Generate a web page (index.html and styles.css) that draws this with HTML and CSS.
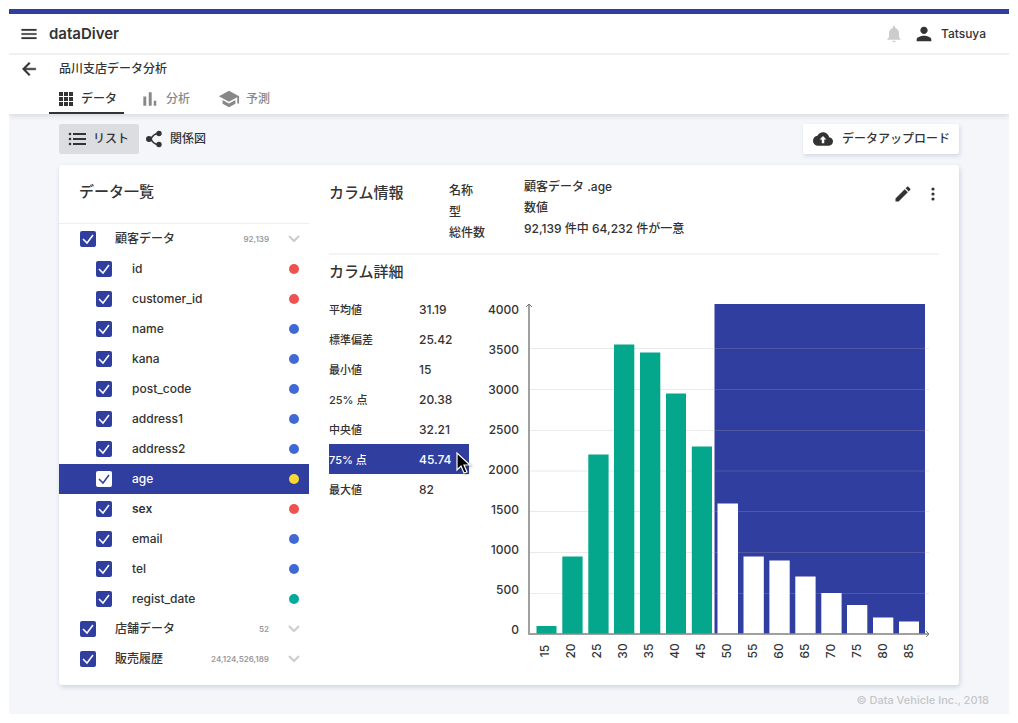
FILE: index.html
```html
<!DOCTYPE html>
<html lang="ja">
<head>
<meta charset="utf-8">
<title>dataDiver</title>
<link rel="stylesheet" href="styles.css">
</head>
<body>
<div class="app">
  <header class="topbar">
    <button class="icon-btn" aria-label="メニュー"><svg class="icon" width="20" height="20" viewBox="0 0 24 24"><path d="M3 18h18v-2H3v2zm0-5h18v-2H3v2zm0-7v2h18V6H3z" stroke="#333" stroke-width=".2"/></svg></button>
    <h1 class="brand">dataDiver</h1>
    <button class="icon-btn bell" aria-label="通知"><svg class="icon" width="20" height="20" viewBox="0 0 24 24"><path d="M12 22c1.100 0 2-.9 2-2h-4c0 1.100.89 2 2 2zm6-6v-5c0-3.070-1.640-5.640-4.500-6.320V4c0-.83-.67-1.500-1.500-1.500s-1.500.67-1.500 1.500v.68C7.630 5.360 6 7.920 6 11v5l-2 2v1h16v-1l-2-2z"/></svg></button>
    <button class="user"><svg class="icon" width="22" height="22" viewBox="0 0 24 24"><path d="M12 12c2.210 0 4-1.790 4-4s-1.790-4-4-4-4 1.790-4 4 1.790 4 4 4zm0 2c-2.670 0-8 1.340-8 4v2h16v-2c0-2.660-5.330-4-8-4z"/></svg><span>Tatsuya</span></button>
  </header>

  <div class="subhead">
    <div class="crumb">
      <button class="icon-btn" aria-label="戻る"><svg class="icon" width="20" height="20" viewBox="0 0 24 24"><path d="M20 11H7.800l5.600-5.600L12 4l-8 8 8 8 1.400-1.400L7.800 13H20z" stroke="#333" stroke-width=".6"/></svg></button>
      <span class="crumb-title">品川支店データ分析</span>
    </div>
    <nav class="tabs">
      <a class="tab active" href="#data"><svg class="icon" width="20" height="20" viewBox="0 0 20 20"><path d="M4 3h4v4H4zM9 3h4v4H9zM14 3h4v4h-4zM4 8h4v4H4zM9 8h4v4H9zM14 8h4v4h-4zM4 13h4v4H4zM9 13h4v4H9zM14 13h4v4h-4z"/></svg>データ</a>
      <a class="tab" href="#analysis"><svg class="icon" width="20" height="20" viewBox="0 0 24 24"><path d="M4 9h3.500v11H4zM10.500 4h3.500v16h-3.500zM16.500 14h3v6h-3z"/></svg>分析</a>
      <a class="tab wide" href="#predict"><svg class="icon" width="22" height="22" viewBox="0 0 24 24"><path d="M5 13.180v4L12 21l7-3.820v-4L12 17l-7-3.820zM12 3L1 9l11 6 9-4.910V17h2V9L12 3z"/></svg>予測</a>
    </nav>
  </div>

  <main class="main">
    <div class="toolbar">
      <button class="tool selected"><svg class="icon" width="20" height="20" viewBox="0 0 20 20"><path d="M6 4h13v2H6zM6 9h13v2H6zM6 14h13v2H6z"/><circle cx="3" cy="5" r="1.300"/><circle cx="3" cy="10" r="1.300"/><circle cx="3" cy="15" r="1.300"/></svg>リスト</button>
      <button class="tool"><svg class="icon" width="20" height="20" viewBox="0 0 20 20"><path d="M15 4Q9 5 7 10Q9 15 15 16M3 10h5" fill="none" stroke="#333" stroke-width="1.600"/><circle cx="5" cy="10" r="3"/><circle cx="15" cy="4.500" r="2.700"/><circle cx="15" cy="15.500" r="2.700"/></svg>関係図</button>
      <button class="upload"><svg class="icon" width="20" height="20" viewBox="0 0 24 24"><path d="M19.350 10.040C18.670 6.590 15.640 4 12 4 9.110 4 6.600 5.640 5.350 8.040 2.340 8.360 0 10.910 0 14c0 3.310 2.690 6 6 6h13c2.760 0 5-2.240 5-5 0-2.640-2.050-4.780-4.650-4.960zM13.500 12.500v4.500h-3v-4.500H8l4-4 4 4z" fill-rule="evenodd"/></svg>データアップロード</button>
    </div>

    <div class="card">
      <section class="side">
        <h2 class="side-title">データ一覧</h2>
        <ul class="list">
          <li class="row table"><label><input type="checkbox" checked><span>顧客データ</span></label><small>92,139</small><svg class="chev" width="12" height="8" viewBox="0 0 12 8"><path d="M1 1l5 5 5-5"/></svg></li>
          <li class="row"><label><input type="checkbox" checked><span>id</span></label><i class="dot red"></i></li>
          <li class="row"><label><input type="checkbox" checked><span>customer_id</span></label><i class="dot red"></i></li>
          <li class="row"><label><input type="checkbox" checked><span>name</span></label><i class="dot blue"></i></li>
          <li class="row"><label><input type="checkbox" checked><span>kana</span></label><i class="dot blue"></i></li>
          <li class="row"><label><input type="checkbox" checked><span>post_code</span></label><i class="dot blue"></i></li>
          <li class="row"><label><input type="checkbox" checked><span>address1</span></label><i class="dot blue"></i></li>
          <li class="row"><label><input type="checkbox" checked><span>address2</span></label><i class="dot blue"></i></li>
          <li class="row current"><label><input type="checkbox" checked><span>age</span></label><i class="dot yellow"></i></li>
          <li class="row strong"><label><input type="checkbox" checked><span>sex</span></label><i class="dot red"></i></li>
          <li class="row"><label><input type="checkbox" checked><span>email</span></label><i class="dot blue"></i></li>
          <li class="row"><label><input type="checkbox" checked><span>tel</span></label><i class="dot blue"></i></li>
          <li class="row"><label><input type="checkbox" checked><span>regist_date</span></label><i class="dot green"></i></li>
          <li class="row table"><label><input type="checkbox" checked><span>店舗データ</span></label><small>52</small><svg class="chev" width="12" height="8" viewBox="0 0 12 8"><path d="M1 1l5 5 5-5"/></svg></li>
          <li class="row table"><label><input type="checkbox" checked><span>販売履歴</span></label><small>24,124,526,189</small><svg class="chev" width="12" height="8" viewBox="0 0 12 8"><path d="M1 1l5 5 5-5"/></svg></li>
        </ul>
      </section>

      <section class="detail">
        <div class="info">
          <h2 class="title">カラム情報</h2>
          <dl class="facts">
            <dt>名称</dt><dd>顧客データ .age</dd>
            <dt>型</dt><dd>数値</dd>
            <dt>総件数</dt><dd>92,139 件中 64,232 件が一意</dd>
          </dl>
          <div class="actions">
            <button class="icon-btn" aria-label="編集"><svg class="icon" width="20" height="20" viewBox="0 0 24 24"><path d="M3 17.250V21h3.750L17.810 9.940l-3.750-3.750L3 17.250zM20.710 7.040c.39-.39.39-1.020 0-1.410l-2.340-2.340c-.39-.39-1.020-.39-1.410 0l-1.830 1.830 3.750 3.750 1.830-1.830z"/></svg></button>
            <button class="icon-btn" aria-label="その他"><svg class="icon" width="20" height="20" viewBox="0 0 20 20"><circle cx="10" cy="5" r="1.600"/><circle cx="10" cy="10" r="1.600"/><circle cx="10" cy="15" r="1.600"/></svg></button>
          </div>
        </div>
        <h2 class="title second">カラム詳細</h2>
        <div class="body">
          <div class="stats-wrap">
          <table class="stats">
            <tr><th scope="row">平均値</th><td>31.19</td></tr>
            <tr><th scope="row">標準偏差</th><td>25.42</td></tr>
            <tr><th scope="row">最小値</th><td>15</td></tr>
            <tr><th scope="row">25% 点</th><td>20.38</td></tr>
            <tr><th scope="row">中央値</th><td>32.21</td></tr>
            <tr class="hover"><th scope="row">75% 点</th><td>45.74</td></tr>
            <tr><th scope="row">最大値</th><td>82</td></tr>
          </table>
          <svg class="cursor" width="16" height="24" viewBox="0 0 16 24"><path d="M1 1v17l4-4 3 7 3-1-3-7h6z" fill="#000" stroke="#fff" stroke-width="1.200"/></svg>
          </div>
          <svg class="chart" viewBox="0 0 455 370" role="img" aria-label="年齢の分布">
            <rect class="range" x="230.500" y="10" width="210.500" height="330"/>
            <path class="grid" d="M45 54.500h400M45 95.500h400M45 136.500h400M45 177h400M45 217.500h400M45 258.500h400M45 299.500h400"/>
            <g class="bars">
              <rect x="52.500" y="332" width="20" height="8"/>
              <rect x="78.300" y="262.500" width="20.300" height="77.500"/>
              <rect x="104.300" y="160.500" width="20.300" height="179.500"/>
              <rect x="130" y="50.500" width="20.300" height="289.500"/>
              <rect x="156" y="58.500" width="20.300" height="281.500"/>
              <rect x="182" y="99.500" width="20" height="240.500"/>
              <rect x="207.800" y="152.500" width="20.200" height="187.500"/>
            </g>
            <g class="bars over">
              <rect x="233.500" y="209.500" width="20.500" height="130.500"/>
              <rect x="259.500" y="262.500" width="20.300" height="77.500"/>
              <rect x="285.400" y="266.500" width="20.300" height="73.500"/>
              <rect x="311.300" y="282.500" width="20.300" height="57.500"/>
              <rect x="337.300" y="299" width="20.300" height="41"/>
              <rect x="363" y="311" width="20.300" height="29"/>
              <rect x="389" y="323.500" width="20.300" height="16.500"/>
              <rect x="415" y="327.500" width="20" height="12.500"/>
            </g>
            <path class="axis" d="M45 11v329h400"/>
            <path class="tip" d="M42 13l3-3 3 3M442 337l3 3-3 3"/>
            <g class="ylab">
              <text x="35" y="20">4000</text><text x="35" y="60">3500</text><text x="35" y="100">3000</text>
              <text x="35" y="140">2500</text><text x="35" y="180">2000</text><text x="35" y="220">1500</text>
              <text x="35" y="260">1000</text><text x="35" y="300">500</text><text x="35" y="340">0</text>
            </g>
            <g class="xlab" transform="translate(0 357) rotate(-90)">
              <text y="65">15</text><text y="91">20</text><text y="117">25</text><text y="143">30</text><text y="169">35</text>
              <text y="195">40</text><text y="221">45</text><text y="247">50</text><text y="273">55</text><text y="299">60</text>
              <text y="325">65</text><text y="351">70</text><text y="377">75</text><text y="403">80</text><text y="429">85</text>
            </g>
          </svg>
        </div>
      </section>
    </div>
    <footer class="foot">© Data Vehicle Inc., 2018</footer>
  </main>
</div>
</body>
</html>
```
FILE: styles.css
```css
* { box-sizing: border-box; }
body {
  margin: 0;
  padding: 9px;
  background: #fff;
  color: #333;
  font: 500 12px/20px Inter, "Noto Sans CJK JP", sans-serif;
}
h1, h2, ul, dl, dd { margin: 0; padding: 0; }
ul { list-style: none; }
button {
  border: 0;
  padding: 0;
  background: none;
  color: inherit;
  font: inherit;
  display: flex;
  align-items: center;
}
.icon { display: block; fill: currentColor; flex: none; }
.app { border-top: 5px solid #303e9f; }

.topbar {
  display: flex;
  align-items: center;
  height: 41px;
  padding: 0 23px 0 10px;
  border-bottom: 2px solid #f0f0f1;
}
.brand { margin-left: 10px; font-size: 15px; font-weight: 600; }
.bell { margin-left: auto; color: #ccc; }
.user { margin-left: 9px; gap: 6px; }

.subhead {
  position: relative;
  background: #fff;
  box-shadow: 0 1px 6px rgba(60, 40, 50, .18);
  clip-path: inset(0 0 -10px 0);
}
.crumb { display: flex; align-items: center; height: 28px; padding: 0 10px; gap: 20px; }
.tabs { display: flex; height: 31px; padding-left: 40px; gap: 10px; }
.tab {
  display: flex;
  align-items: center;
  gap: 6px;
  padding: 2px 7px 0 6px;
  color: #888;
  text-decoration: none;
  border-bottom: 2px solid transparent;
}
.tab.active { color: #333; border-color: #333; }
.tab.wide { margin-left: 5px; }

.main { padding: 10px 50px 4px; background: #f4f6fa; }
.toolbar { display: flex; gap: 5px; height: 30px; }
.tool { padding: 0 10px 0 8px; gap: 6px; border-radius: 2px; }
.tool:not(.selected) { padding-left: 0; }
.selected { background: #dcdde1; }
.upload {
  margin-left: auto;
  padding: 0 9px 0 10px;
  gap: 9px;
  background: #fff;
  border-radius: 2px;
  box-shadow: 1px 2px 4px rgba(50, 70, 120, .18);
}

.card {
  display: flex;
  margin-top: 11px;
  background: #fff;
  border-radius: 3px;
  box-shadow: 1px 2px 5px rgba(50, 70, 120, .2);
}
.side { width: 250px; flex: none; }
.side-title {
  height: 59px;
  padding: 17px 20px 0;
  border-bottom: 1px solid #eeeef0;
  font-size: 15px;
  font-weight: 500;
}
.list { padding-bottom: 11px; }
.row { display: flex; align-items: center; height: 30px; padding: 0 10px 0 37px; }
.row.table { padding: 0 9px 0 21px; }
.row label { display: flex; align-items: center; gap: 20px; flex: 1; }
.row.table label { gap: 19px; }
.row input {
  appearance: none;
  width: 16px;
  height: 16px;
  margin: 0;
  border-radius: 2px;
  background: #303e9f;
  color: #fff;
  display: grid;
}
.row input::before {
  content: "";
  background: currentColor;
  mask: url("data:image/svg+xml,%3Csvg xmlns='http://www.w3.org/2000/svg' viewBox='0 0 16 16'%3E%3Cpath d='M3 8l4 4 6-8' fill='none' stroke='black' stroke-width='1.500'/%3E%3C/svg%3E");
}
.row small { color: #999; font-size: 8px; font-weight: 600; margin-right: 19px; }
.chev { fill: none; stroke: #ccc; stroke-width: 2; }
.row.current { background: #303e9f; color: #fff; }
.current input { background: #fff; color: #303e9f; }
.row.strong { font-weight: 600; }
.dot { width: 10px; height: 10px; border-radius: 50%; }
.red { background: #ef5350; }
.blue { background: #4169d6; }
.yellow { background: #fdd835; }
.green { background: #00ab9c; }

.detail { flex: 1; padding: 0 20px; min-width: 0; }
.info { display: flex; height: 90px; padding-top: 12px; border-bottom: 2px solid #f4f4f5; }
.title { width: 120px; padding-top: 6px; font-size: 15px; font-weight: 500; }
.facts { display: grid; grid-template-columns: 75px auto; grid-auto-rows: 21px; }
.facts dt { padding-top: 4px; }
.actions { display: flex; align-items: flex-start; gap: 10px; margin: 7px -4px 0 auto; }
.second { height: 39px; padding-top: 7px; }
.body { display: flex; gap: 15px; }
.stats-wrap { position: relative; width: 140px; flex: none; }
.stats { width: 100%; border-collapse: collapse; }
.stats th, .stats td { height: 30px; padding: 2px 0 0; text-align: left; font-weight: 500; }
.stats th { width: 90px; font-size: 11px; }
.hover { background: #303e9f; color: #fff; }
.cursor { position: absolute; right: -3px; top: 158px; filter: drop-shadow(1px 1px 1px rgba(0, 0, 0, .4)); }
.chart { flex: 1; min-width: 0; align-self: flex-start; }
.range { fill: #303e9f; }
.grid { stroke: #aaa; stroke-opacity: .25; }
.bars { fill: #04a78b; }
.over { fill: #fff; }
.axis { fill: none; stroke: #888; stroke-opacity: .8; stroke-width: 2; }
.tip { fill: none; stroke: #777; }
.chart text { fill: #333; font-size: 12px; }
.ylab { text-anchor: end; }
.xlab { text-anchor: middle; }

.foot { padding-top: 5px; text-align: right; margin-right: -30px; color: #c4c6ca; font-size: 11px; }
```
